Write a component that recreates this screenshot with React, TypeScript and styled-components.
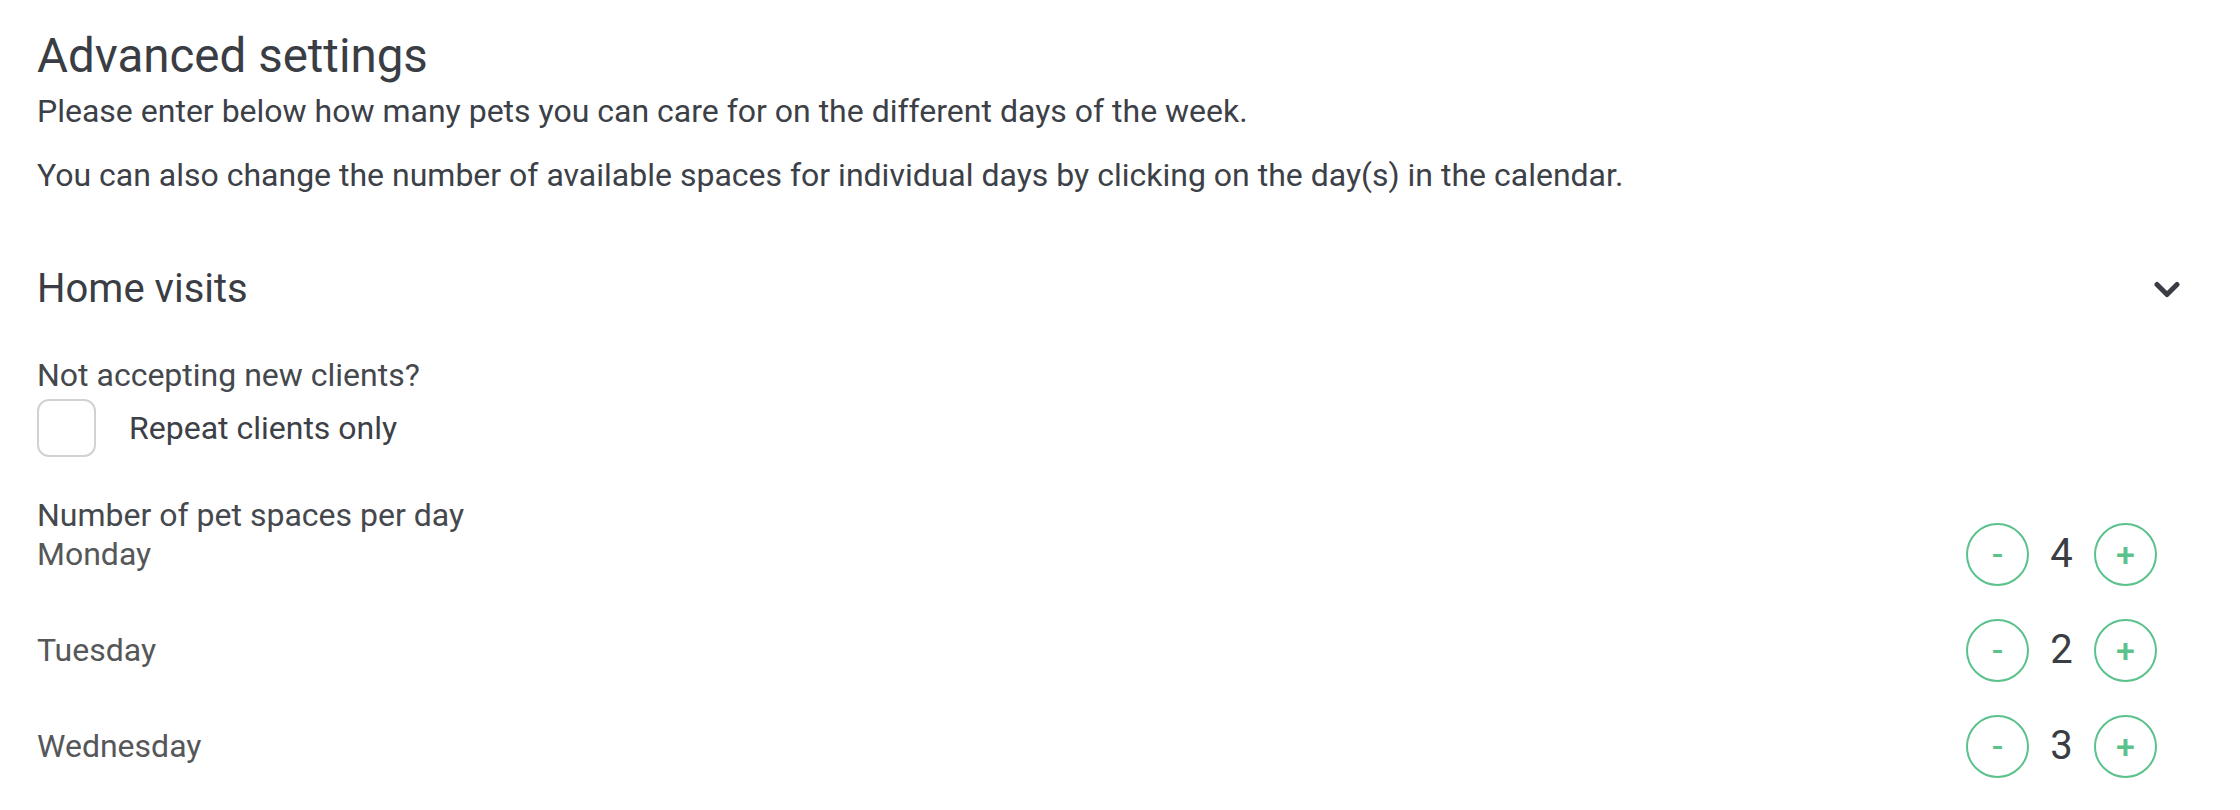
import React, { useState } from "react";
import styled, { createGlobalStyle } from "styled-components";

const GlobalStyle = createGlobalStyle`
    html, body {
        margin:0;
        padding:0;
        background:#ffffff;
    }
    body {
        font-family: Roboto, "Liberation Sans", sans-serif;
        color:#3c4047;
    }
`

const Page = styled.div`
    padding:26px 60px 40px 37px;
`

const Title = styled.h1`
    margin:0;
    font-size:47.5px;
    line-height:60px;
    font-weight:400;
    color:#3a3d43;
`

const Intro = styled.p<{gap:number}>`
    margin:${props=>props.gap}px 0 0;
    font-size:32px;
    line-height:40px;
    color:#3c4047;
`

const SectionHead = styled.div`
    display:flex;
    justify-content:space-between;
    align-items:center;
    margin-top:69px;
    height:50px;
`

const SectionTitle = styled.h2`
    margin:0;
    font-size:40px;
    line-height:50px;
    font-weight:400;
    color:#3a3d43;
`

const Chevron = styled.svg`
    width:26px;
    height:17px;
    display:block;
`

const Label = styled.div<{gap:number}>`
    margin-top:${props=>props.gap}px;
    font-size:32px;
    line-height:40px;
    color:#45484d;
`

const CheckRow = styled.label`
    display:flex;
    align-items:center;
    gap:33px;
    margin-top:4px;
    font-size:32px;
    line-height:40px;
    color:#3c4047;
    cursor:pointer;
`

const Box = styled.span<{checked:boolean}>`
    width:59px;
    height:58px;
    box-sizing:border-box;
    border:2px solid #d2d2d2;
    border-radius:12px;
    background:${props=>props.checked ? '#5bc28c' : '#fff'};
`

const DaysHead = styled(Label)`
    margin-bottom:-13px;
`

const DayList = styled.div`
    display:flex;
    flex-direction:column;
    gap:32px;
`

const DayRow = styled.div`
    display:flex;
    justify-content:space-between;
    align-items:center;
    min-height:64px;
`

const DayName = styled.span`
    font-size:32px;
    line-height:40px;
    color:#555759;
`

const Stepper = styled.div`
    display:flex;
    align-items:center;
    margin-right:23px;
`

const RoundButton = styled.button`
    width:63px;
    height:63px;
    box-sizing:border-box;
    border:2px solid #5bc28c;
    border-radius:50%;
    background:#fff;
    color:#5bc28c;
    font-family:Roboto, "Liberation Sans", sans-serif;
    font-size:34px;
    font-weight:500;
    line-height:1;
    padding:0;
    display:flex;
    align-items:center;
    justify-content:center;
    cursor:pointer;
`

const Count = styled.span`
    width:65px;
    text-align:center;
    font-size:40px;
    line-height:50px;
    color:#3a3d43;
`

const initialDays = [
    {day:'Monday', count:4},
    {day:'Tuesday', count:2},
    {day:'Wednesday', count:3},
]

function App() {
    const [repeatOnly, setRepeatOnly] = useState(false)
    const [days, setDays] = useState(initialDays)

    const change = (i:number, delta:number) => {
        setDays(days.map((d, idx) => idx === i ? {...d, count:Math.max(0, d.count + delta)} : d))
    }

    return <>
        <GlobalStyle/>
        <Page>
            <Title>Advanced settings</Title>
            <Intro gap={5}>Please enter below how many pets you can care for on the different days of the week.</Intro>
            <Intro gap={24}>You can also change the number of available spaces for individual days by clicking on the day(s) in the calendar.</Intro>

            <SectionHead>
                <SectionTitle>Home visits</SectionTitle>
                <Chevron viewBox="0 0 26 17">
                    <polyline points="3,3.5 13,13.5 23,3.5" fill="none" stroke="#3a3d43" strokeWidth="5" strokeLinecap="round" strokeLinejoin="round"/>
                </Chevron>
            </SectionHead>

            <Label gap={41}>Not accepting new clients?</Label>
            <CheckRow onClick={()=>setRepeatOnly(!repeatOnly)}>
                <Box checked={repeatOnly}/>
                Repeat clients only
            </CheckRow>

            <DaysHead gap={38}>Number of pet spaces per day</DaysHead>
            <DayList>
                {days.map((d, i) => <DayRow key={d.day}>
                    <DayName>{d.day}</DayName>
                    <Stepper>
                        <RoundButton onClick={()=>change(i, -1)}>-</RoundButton>
                        <Count>{d.count}</Count>
                        <RoundButton onClick={()=>change(i, 1)}>+</RoundButton>
                    </Stepper>
                </DayRow>)}
            </DayList>
        </Page>
    </>
}

export default App
